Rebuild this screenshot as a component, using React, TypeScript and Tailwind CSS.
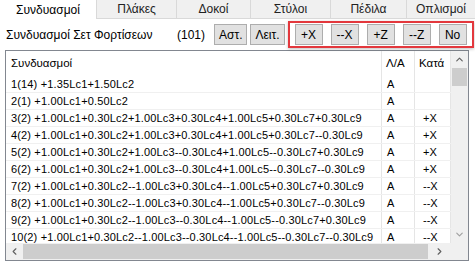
import { ChevronUp, ChevronDown, ChevronLeft, ChevronRight } from 'lucide-react';

const tabs = [
  { label: 'Συνδυασμοί', w: 'w-[96px]', active: true },
  { label: 'Πλάκες', w: 'w-[80px]' },
  { label: 'Δοκοί', w: 'w-[74px]' },
  { label: 'Στύλοι', w: 'w-[80px]' },
  { label: 'Πέδιλα', w: 'w-[76px]' },
  { label: 'Οπλισμοί', w: 'flex-1' },
];

const rows = [
  ['1(14) +1.35Lc1+1.50Lc2', 'A', ''],
  ['2(1) +1.00Lc1+0.50Lc2', 'A', ''],
  ['3(2) +1.00Lc1+0.30Lc2+1.00Lc3+0.30Lc4+1.00Lc5+0.30Lc7+0.30Lc9', 'A', '+X'],
  ['4(2) +1.00Lc1+0.30Lc2+1.00Lc3+0.30Lc4+1.00Lc5+0.30Lc7--0.30Lc9', 'A', '+X'],
  ['5(2) +1.00Lc1+0.30Lc2+1.00Lc3--0.30Lc4+1.00Lc5--0.30Lc7+0.30Lc9', 'A', '+X'],
  ['6(2) +1.00Lc1+0.30Lc2+1.00Lc3--0.30Lc4+1.00Lc5--0.30Lc7--0.30Lc9', 'A', '+X'],
  ['7(2) +1.00Lc1+0.30Lc2--1.00Lc3+0.30Lc4--1.00Lc5+0.30Lc7+0.30Lc9', 'A', '--X'],
  ['8(2) +1.00Lc1+0.30Lc2--1.00Lc3+0.30Lc4--1.00Lc5+0.30Lc7--0.30Lc9', 'A', '--X'],
  ['9(2) +1.00Lc1+0.30Lc2--1.00Lc3--0.30Lc4--1.00Lc5--0.30Lc7+0.30Lc9', 'A', '--X'],
  ['10(2) +1.00Lc1+0.30Lc2--1.00Lc3--0.30Lc4--1.00Lc5--0.30Lc7--0.30Lc9', 'A', '--X'],
];

function Btn({ label }: { label: string }) {
  return (
    <div className="h-[21px] w-[28px] flex items-center justify-center bg-[#e1e1e1] border border-[#adadad] text-[12px]">
      {label}
    </div>
  );
}

export default function App() {
  return (
    <div
      className="w-[475px] h-[262px] bg-white text-black overflow-hidden"
      style={{ fontFamily: '"Liberation Sans", Arial, sans-serif' }}
    >
      {/* tabs */}
      <div className="flex h-[19px] text-[12px]">
        {tabs.map((t) => (
          <div
            key={t.label}
            className={
              t.active
                ? `${t.w} flex items-center justify-center bg-white`
                : `${t.w} flex items-center justify-center bg-[#f0f0f0] border-l border-b border-[#d9d9d9] text-[#222]`
            }
          >
            {t.label}
          </div>
        ))}
      </div>

      {/* controls */}
      <div className="flex items-center h-[31px] pl-[6px] text-[12px]">
        <span className="w-[171px]">Συνδυασμοί Σετ Φορτίσεων</span>
        <span className="w-[37px]">(101)</span>
        <div className="flex gap-[3px]">
          <div className="h-[21px] px-[4px] flex items-center bg-[#e1e1e1] border border-[#adadad]">Αστ.</div>
          <div className="h-[21px] px-[4px] flex items-center bg-[#e1e1e1] border border-[#adadad]">Λειτ.</div>
        </div>
        <div className="ml-[3px] h-[27px] flex items-center gap-[8px] px-[5px] border-[2px] border-[#e3383d] shadow-[0_1px_3px_rgba(0,0,0,0.25)]">
          <Btn label="+X" />
          <Btn label="--X" />
          <Btn label="+Z" />
          <Btn label="--Z" />
          <Btn label="No" />
        </div>
      </div>

      {/* table */}
      <div className="ml-[5px] w-[464px] h-[211px] border border-[#828790] flex flex-col text-[11px]">
        <div className="flex flex-1 min-h-0">
          <div className="flex-1 min-w-0 overflow-hidden">
            <div className="flex h-[25px] items-center text-[11.5px]">
              <div className="w-[375px] pl-[5px]">Συνδυασμοί</div>
              <div className="w-[33px] h-full flex items-center pl-[4px] border-l border-[#e5e5e5]">Λ/Α</div>
              <div className="flex-1 h-full flex items-center pl-[4px] border-l border-r border-[#e5e5e5]">Κατά</div>
            </div>
            {rows.map((r, i) => (
              <div key={i} className="flex h-[17px] items-center border-b border-[#f0f0f0]">
                <div className="w-[375px] pl-[5px] whitespace-nowrap overflow-hidden tracking-[0.15px]">{r[0]}</div>
                <div className="w-[33px] h-full flex items-center pl-[5px] border-l border-[#e5e5e5]">{r[1]}</div>
                <div className="flex-1 h-full flex items-center pl-[8px] border-l border-r border-[#e5e5e5]">{r[2]}</div>
              </div>
            ))}
          </div>
          <div className="w-[17px] bg-[#f0f0f0] flex flex-col items-center">
            <div className="h-[17px] flex items-center justify-center">
              <ChevronUp size={11} strokeWidth={2.5} color="#606060" />
            </div>
            <div className="w-[15px] h-[18px] bg-[#cdcdcd]" />
            <div className="flex-1" />
            <div className="h-[17px] flex items-center justify-center">
              <ChevronDown size={11} strokeWidth={2.5} color="#a0a0a0" />
            </div>
          </div>
        </div>
        <div className="flex h-[17px]">
          <div className="flex-1 bg-[#f0f0f0] flex items-center">
            <div className="w-[17px] flex items-center justify-center">
              <ChevronLeft size={11} strokeWidth={2.5} color="#606060" />
            </div>
            <div className="w-[405px] h-[15px] bg-[#cdcdcd]" />
            <div className="flex-1 flex items-center justify-center">
              <ChevronRight size={11} strokeWidth={2.5} color="#606060" />
            </div>
          </div>
          <div className="w-[17px] bg-[#f0f0f0]" />
        </div>
      </div>
    </div>
  );
}
